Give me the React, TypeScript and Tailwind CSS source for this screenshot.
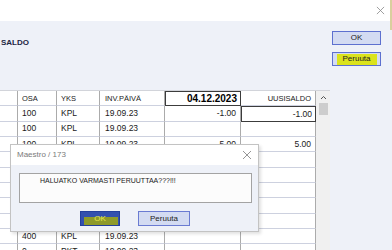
import React from "react";

type Row = { osa: string; yks: string; pvm: string; inv: string; uusi: string };

const rows: Row[] = [
  { osa: "100", yks: "KPL", pvm: "19.09.23", inv: "-1.00", uusi: "-1.00" },
  { osa: "100", yks: "KPL", pvm: "19.09.23", inv: "", uusi: "" },
  { osa: "100", yks: "KPL", pvm: "19.09.23", inv: "5.00", uusi: "5.00" },
  { osa: "100", yks: "KPL", pvm: "19.09.23", inv: "", uusi: "" },
  { osa: "200", yks: "KPL", pvm: "19.09.23", inv: "", uusi: "" },
  { osa: "100", yks: "KPL", pvm: "19.09.23", inv: "", uusi: "" },
  { osa: "100", yks: "KPL", pvm: "19.09.23", inv: "", uusi: "" },
  { osa: "100", yks: "KPL", pvm: "19.09.23", inv: "", uusi: "" },
  { osa: "400", yks: "KPL", pvm: "19.09.23", inv: "", uusi: "" },
  { osa: "0", yks: "PKT", pvm: "19.09.23", inv: "", uusi: "" },
];

const cell = "h-full shrink-0 border-r border-b border-r-[#ababab] border-b-[#cdd1df] flex items-center";

function CloseX({ size = 9 }: { size?: number }) {
  return (
    <svg width={size} height={size} viewBox="0 0 10 10" fill="none" stroke="#8a8a8a" strokeWidth="0.9">
      <path d="M1 1L9 9M9 1L1 9" />
    </svg>
  );
}

export default function App() {
  return (
    <div className="relative w-[392px] h-[250px] overflow-hidden bg-[#eef1f8] font-['Liberation_Sans',Arial,sans-serif] text-[#1a1a1a]">
      {/* window title bar */}
      <div className="h-[21px] bg-white flex items-center justify-end pr-[7px]">
        <CloseX />
      </div>
      <div className="absolute right-0 top-0 w-[2px] h-[30px] bg-[#d9cf9e]" />

      <div className="flex h-[229px]">
        {/* left side */}
        <div className="w-[330px] flex flex-col">
          <div className="h-[69px] pt-[17px] pl-[1px]">
            <div className="text-[8px] font-bold text-[#1d2642] leading-[10px]">SALDO</div>
          </div>

          <div className="flex flex-1 border-t border-[#d2d4da] overflow-hidden">
            <div className="w-[316px] bg-white">
              {/* header */}
              <div className="flex h-[15.33px] text-[7.5px]">
                <div className={`${cell} w-[18px]`} />
                <div className={`${cell} w-[39px] pl-[4px]`}>OSA</div>
                <div className={`${cell} w-[43px] pl-[4px]`}>YKS</div>
                <div className={`${cell} w-[65px] pl-[5px]`}>INV.PÄIVÄ</div>
                <div className="h-full w-[76px] shrink-0 border border-[#3c3c3c] flex items-center justify-end pr-[3px] text-[10px] font-bold text-black">
                  04.12.2023
                </div>
                <div className={`${cell} w-[75px] justify-end pr-[4px]`}>UUSISALDO</div>
              </div>
              {rows.map((r, i) => (
                <div key={i} className="flex h-[15.33px] text-[8.5px]">
                  <div className={`${cell} w-[18px]`} />
                  <div className={`${cell} w-[39px] pl-[4px]`}>{r.osa}</div>
                  <div className={`${cell} w-[43px] pl-[4px]`}>{r.yks}</div>
                  <div className={`${cell} w-[65px] pl-[5px]`}>{r.pvm}</div>
                  <div className={`${cell} w-[76px] justify-end pr-[4px]`}>{r.inv}</div>
                  {i === 0 ? (
                    <div className="h-full w-[75px] shrink-0 border border-[#3c3c3c] flex items-center justify-end pr-[3px]">
                      {r.uusi}
                    </div>
                  ) : (
                    <div className={`${cell} w-[75px] justify-end pr-[4px]`}>{r.uusi}</div>
                  )}
                </div>
              ))}
            </div>
            {/* scrollbar */}
            <div className="w-[14px] bg-[#f0f0f0] flex flex-col items-center pt-[4px]">
              <svg width="7" height="5" viewBox="0 0 7 5" fill="none" stroke="#555" strokeWidth="1">
                <path d="M1 4L3.5 1.5L6 4" />
              </svg>
              <div className="mt-[3px] w-[9px] h-[12px] bg-[#cdcdcd]" />
            </div>
          </div>
        </div>

        {/* right buttons */}
        <div className="pl-[2px] pt-[10px] flex flex-col gap-[7px]">
          <div className="w-[49px] h-[14px] bg-[#d3dbf2] border border-[#5d70cf] flex items-center justify-center text-[8px] text-[#222]">
            OK
          </div>
          <div className="w-[49px] h-[14px] bg-[#d3dbf2] border border-[#5d70cf] flex items-center justify-center p-[1px]">
            <div className="w-[40px] h-[11px] bg-[#dbe31c] flex items-center justify-center text-[8px] text-[#222]">
              Peruuta
            </div>
          </div>
        </div>
      </div>

      {/* confirm dialog */}
      <div className="absolute left-[10px] top-[144px] w-[249px] h-[88px] border border-[#c3c3c3] bg-[#eef1f8] shadow-[2px_2px_3px_rgba(0,0,0,0.12)] flex flex-col">
        <div className="h-[20px] bg-white flex items-center justify-between pl-[6px] pr-[6px]">
          <span className="text-[8px] text-[#7a7a7a]">Maestro / 173</span>
          <CloseX size={10} />
        </div>
        <div className="px-[8px] pt-[8px]">
          <div className="w-[233px] h-[30px] border border-[#a3a3a3] bg-[#fcfcfc] pl-[20px] pt-[2px] text-[7px] leading-[9px] text-[#222]">
            HALUATKO VARMASTI PERUUTTAA???!!!
          </div>
          <div className="flex gap-[18px] pl-[61px] mt-[8px]">
            <div className="relative w-[40px] h-[15px] bg-[#3350ae] border border-[#233f9c] flex items-center justify-center">
              <div className="absolute left-[3px] right-[1px] top-[5px] bottom-0 bg-[#8e9a2a]" />
              <span className="relative text-[8px] text-[#e6e84a]">OK</span>
            </div>
            <div className="w-[52px] h-[15px] bg-[#d3dbf2] border border-[#6a7bd2] flex items-center justify-center text-[8px] text-[#222]">
              Peruuta
            </div>
          </div>
        </div>
      </div>
    </div>
  );
}
